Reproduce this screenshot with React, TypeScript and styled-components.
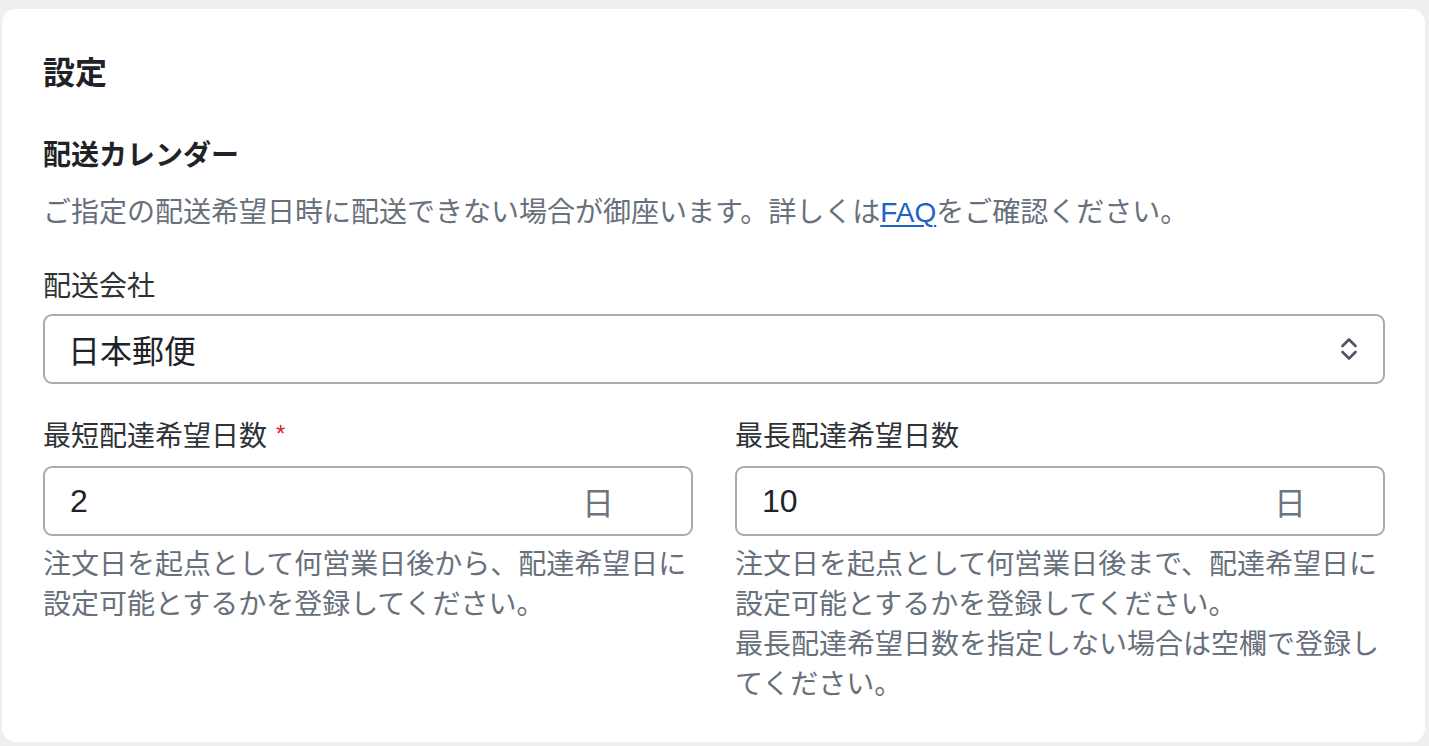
import React from 'react';
import styled, { createGlobalStyle } from 'styled-components';

const GlobalStyle = createGlobalStyle`
  html, body {
    margin: 0;
    padding: 0;
    background: #eeeff1;
  }
  body {
    font-family: 'Liberation Sans', 'Noto Sans CJK JP', sans-serif;
    color: #1f2328;
  }
`;

const Card = styled.section`
  margin: 9px 4px 0 2px;
  padding: 42px 40px 37px 41px;
  background: #ffffff;
  border-radius: 14px;
`;

const Title = styled.h1`
  margin: 0;
  font-size: 32px;
  line-height: 44px;
  font-weight: 700;
  color: #1f2328;
`;

const SectionTitle = styled.h2`
  margin: 41px 0 0;
  font-size: 28px;
  line-height: 40px;
  font-weight: 700;
  color: #1f2328;
`;

const Description = styled.p`
  margin: 17px 0 0;
  font-size: 28px;
  line-height: 40px;
  color: #67707b;
`;

const Link = styled.a`
  color: #1f62c6;
  text-decoration: underline;
  text-underline-offset: 3px;
  text-decoration-thickness: 2px;
`;

const Field = styled.div<{ $top: number }>`
  margin-top: ${(p) => p.$top}px;
  display: flex;
  flex-direction: column;
  min-width: 0;
`;

const Label = styled.label<{ $gap: number }>`
  font-size: 28px;
  line-height: 40px;
  color: #2f3337;
  margin-bottom: ${(p) => p.$gap}px;
  display: flex;
  align-items: center;
`;

const Required = styled.span`
  color: #d2281c;
  font-size: 24px;
  margin-left: 9px;
  margin-top: -6px;
`;

const SelectBox = styled.div`
  height: 70px;
  box-sizing: border-box;
  border: 2px solid #a5aab3;
  border-radius: 9px;
  display: flex;
  align-items: center;
  justify-content: space-between;
  padding: 0 25px 0 23px;
  font-size: 32px;
  color: #1f2328;
`;

const Row = styled.div`
  display: grid;
  grid-template-columns: 1fr 1fr;
  column-gap: 42px;
`;

const InputBox = styled.div`
  height: 70px;
  box-sizing: border-box;
  border: 2px solid #a5aab3;
  border-radius: 9px;
  display: flex;
  align-items: center;
  padding: 0 77px 0 25px;
`;

const NumberInput = styled.input`
  flex: 1;
  min-width: 0;
  border: none;
  outline: none;
  padding: 0;
  background: transparent;
  font-family: inherit;
  font-size: 32px;
  color: #1f2328;
`;

const Suffix = styled.span`
  font-size: 32px;
  color: #6b7480;
`;

const Help = styled.p`
  margin: 9px 0 0;
  font-size: 28px;
  line-height: 40px;
  color: #67707b;
`;

function UpDownIcon() {
  return (
    <svg width="18" height="26" viewBox="0 0 18 26" fill="none" stroke="#4d5560" strokeWidth="2.6" strokeLinecap="round" strokeLinejoin="round">
      <path d="M2.5 10 L9 3.5 L15.5 10" />
      <path d="M2.5 16 L9 22.5 L15.5 16" />
    </svg>
  );
}

export default function App() {
  return (
    <>
      <GlobalStyle />
      <Card>
        <Title>設定</Title>
        <SectionTitle>配送カレンダー</SectionTitle>
        <Description>
          ご指定の配送希望日時に配送できない場合が御座います。詳しくは<Link href="#">FAQ</Link>をご確認ください。
        </Description>
        <Field $top={34}>
          <Label $gap={7}>配送会社</Label>
          <SelectBox>
            <span>日本郵便</span>
            <UpDownIcon />
          </SelectBox>
        </Field>
        <Row>
          <Field $top={33}>
            <Label $gap={9}>
              最短配達希望日数<Required>*</Required>
            </Label>
            <InputBox>
              <NumberInput defaultValue="2" />
              <Suffix>日</Suffix>
            </InputBox>
            <Help>注文日を起点として何営業日後から、配達希望日に設定可能とするかを登録してください。</Help>
          </Field>
          <Field $top={33}>
            <Label $gap={9}>最長配達希望日数</Label>
            <InputBox>
              <NumberInput defaultValue="10" />
              <Suffix>日</Suffix>
            </InputBox>
            <Help>
              注文日を起点として何営業日後まで、配達希望日に設定可能とするかを登録してください。
              <br />
              最長配達希望日数を指定しない場合は空欄で登録してください。
            </Help>
          </Field>
        </Row>
      </Card>
    </>
  );
}
